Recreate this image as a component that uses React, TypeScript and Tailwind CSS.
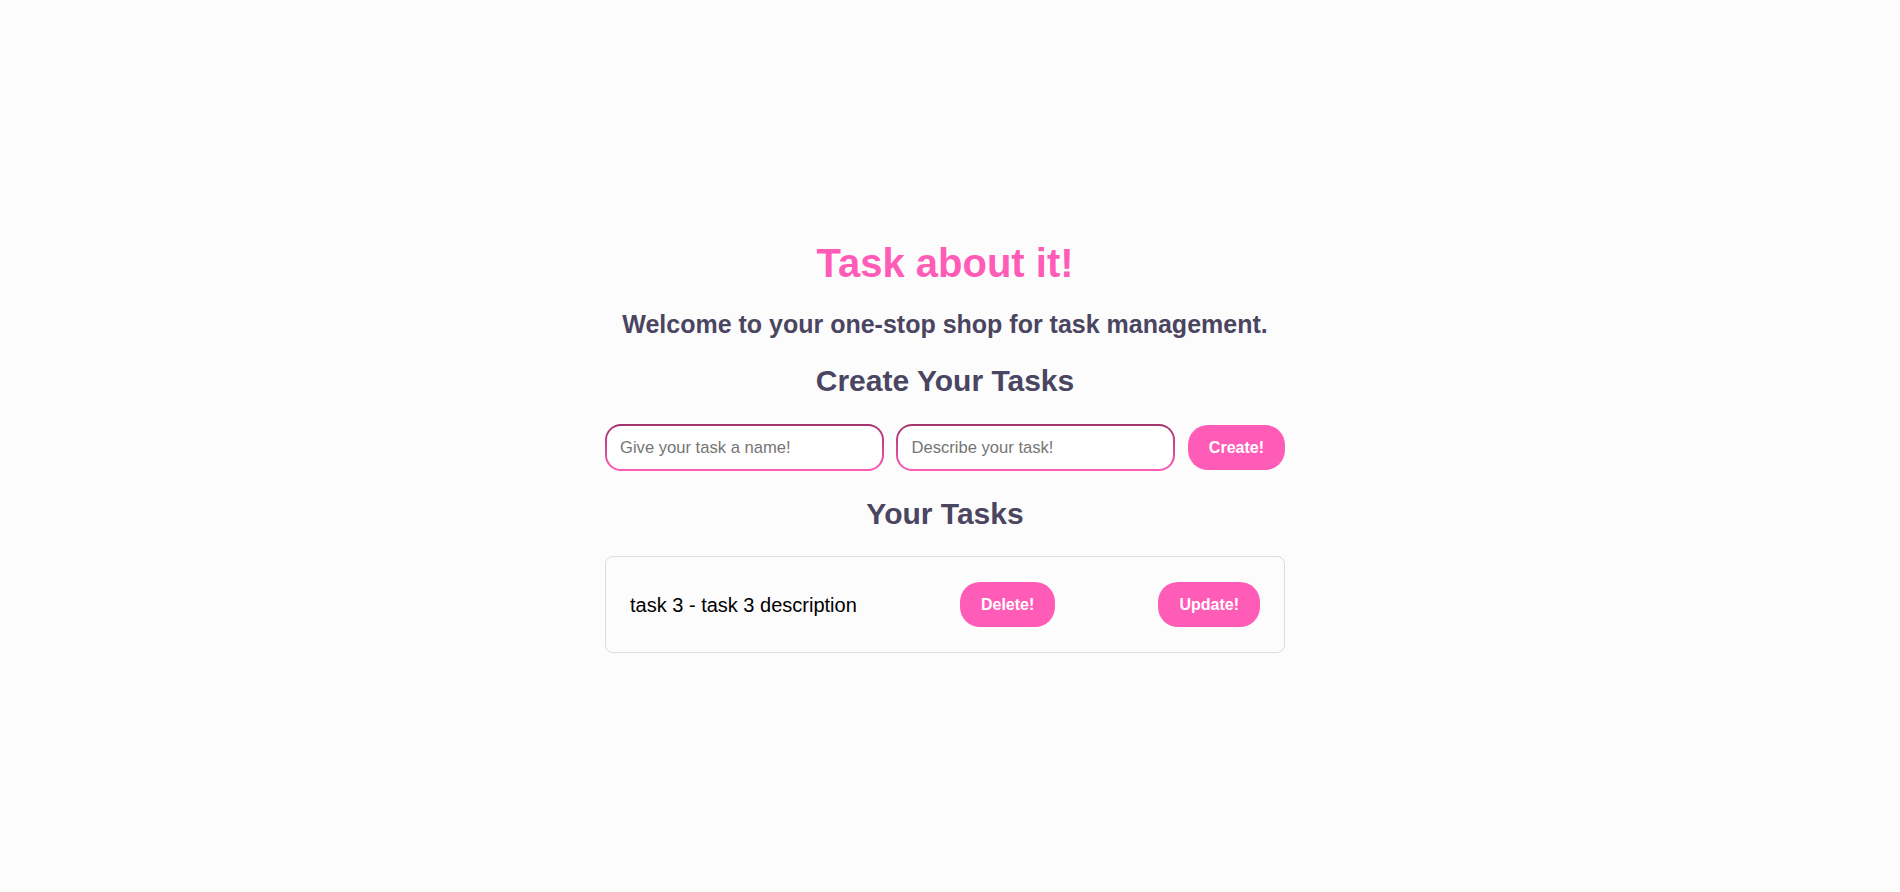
import React from "react";

function GradientInput({ placeholder }: { placeholder: string }) {
  return (
    <div className="rounded-[16px] bg-linear-to-b from-[#a3346c] to-[#ff5cb8] p-[2px] w-[279px] h-[47px]">
      <input
        type="text"
        placeholder={placeholder}
        className="w-full h-full rounded-[14px] bg-white px-[13px] text-[16.6px] text-[#333] placeholder:text-[#757575] outline-none"
      />
    </div>
  );
}

function PinkButton({ children, className = "" }: { children: React.ReactNode; className?: string }) {
  return (
    <button
      type="button"
      className={
        "h-[45px] px-[21px] rounded-[20px] bg-[#ff5cb8] text-white text-[16px] font-bold leading-none " +
        className
      }
    >
      {children}
    </button>
  );
}

export default function App() {
  return (
    <div className="min-h-[892px] bg-[#fdfcfd] flex flex-col items-center pt-[240px] pr-[10px] font-['Liberation_Sans',Arial,sans-serif]">
      <h1 className="text-[40px] leading-[46px] font-bold text-[#ff5cb8]">Task about it!</h1>
      <h2 className="mt-[24px] text-[25px] leading-[29px] font-bold text-[#4a4560]">
        Welcome to your one-stop shop for task management.
      </h2>
      <h2 className="mt-[25px] text-[30px] leading-[34px] font-bold text-[#4a4560]">Create Your Tasks</h2>
      <div className="mt-[26px] w-[680px] flex items-center justify-between">
        <GradientInput placeholder="Give your task a name!" />
        <GradientInput placeholder="Describe your task!" />
        <PinkButton className="h-[44px]">Create!</PinkButton>
      </div>
      <h2 className="mt-[26px] text-[30px] leading-[34px] font-bold text-[#4a4560]">Your Tasks</h2>
      <div className="mt-[25px] w-[680px] border border-[#dddddd] rounded-[8px] bg-[#fdfcfd] px-[24px] py-[25px] flex items-center justify-between">
        <span className="text-[20px] text-black">task 3 - task 3 description</span>
        <PinkButton>Delete!</PinkButton>
        <PinkButton>Update!</PinkButton>
      </div>
    </div>
  );
}
